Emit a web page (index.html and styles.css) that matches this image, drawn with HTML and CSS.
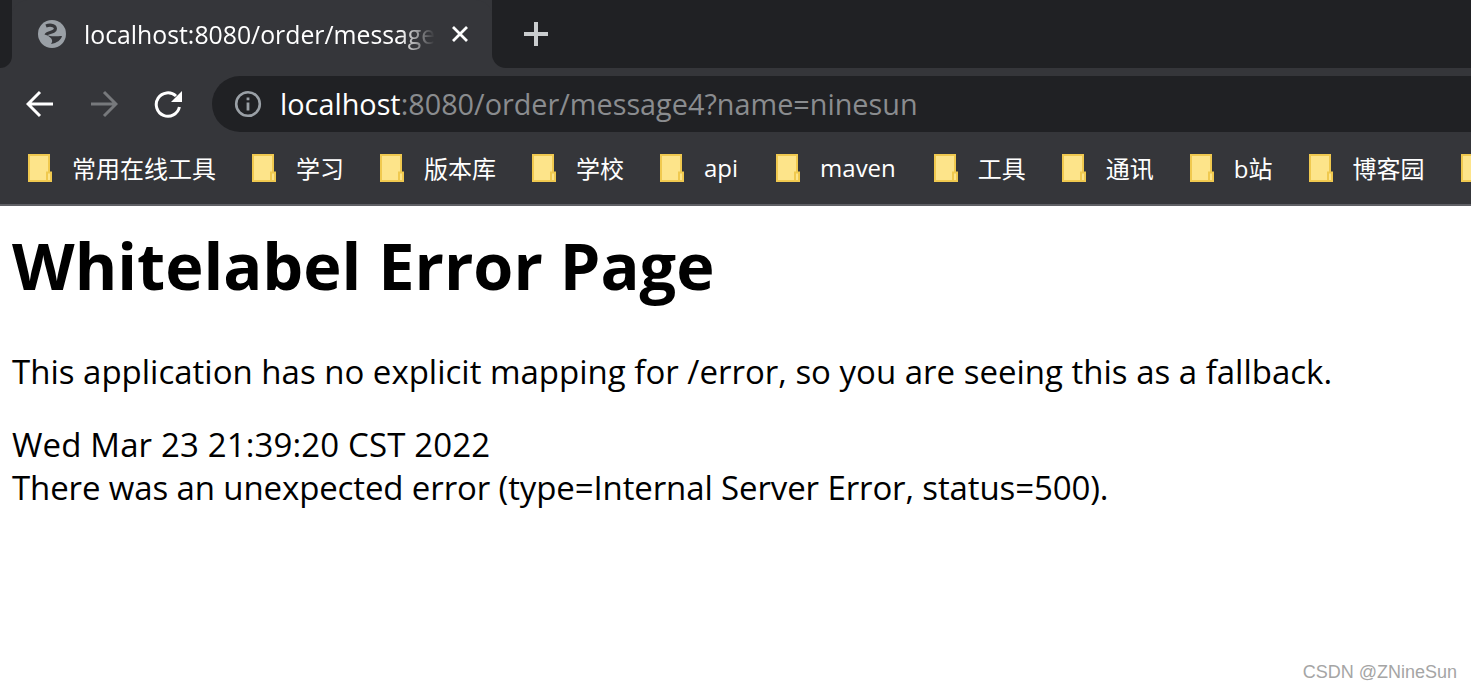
FILE: index.html
```html
<!DOCTYPE html>
<html lang="en">
<head>
    <meta charset="UTF-8">
    <title>Whitelabel Error Page</title>
    <link rel="stylesheet" href="styles.css">
</head>
<body>

<svg class="defs" width="0" height="0">
    <symbol id="folder" viewBox="0 0 24 28">
        <path d="M1 1h20v26H1z" fill="#fde48a" stroke="#f0c94f" stroke-width="2"/>
        <path d="M19 18.5h4v8.500h-4z" fill="#fde48a" stroke="#f0c94f" stroke-width="2"/>
    </symbol>
</svg>

<div class="tabstrip">
    <div class="tab">
        <svg class="globe" width="28" height="28" viewBox="0 0 28 28">
            <circle cx="14" cy="14" r="14" fill="#9aa0a6"/>
            <path d="M8 6C13 4 19 6 17 10C15 13 9 12 8 15" fill="none" stroke="#35363a" stroke-width="3.200"/>
            <path d="M9 15C12 17 20 16 24 16C23 20 19 23 13 24C15 21 15 19 9 15z" fill="#35363a"/>
        </svg>
        <span class="tab-title">localhost:8080/order/message4?name=ninesun</span>
        <svg class="tab-close" width="16" height="16" viewBox="0 0 16 16">
            <path d="M1 1l14 14M15 1L1 15" stroke="#fff" stroke-width="2.8"/>
        </svg>
    </div>
    <svg class="new-tab" width="24" height="24" viewBox="0 0 24 24">
        <path d="M12 0v24M0 12h24" stroke="#c9ccce" stroke-width="4"/>
    </svg>
</div>

<div class="toolbar">
    <svg class="nav-icon" width="28" height="28" viewBox="0 0 28 28" fill="none" stroke="#fff" stroke-width="3">
        <path d="M27 14H3M14 2L2 14l12 12"/>
    </svg>
    <svg class="nav-icon" width="28" height="28" viewBox="0 0 28 28" fill="none" stroke="#77797c" stroke-width="3">
        <path d="M1 14h24M14 2l12 12-12 12"/>
    </svg>
    <svg class="nav-icon" width="28" height="28" viewBox="0 0 28 28">
        <path d="M22 6A11.700 11.700 0 1 0 25.400 17" fill="none" stroke="#fff" stroke-width="3"/>
        <path d="M28 1v11H17z" fill="#fff"/>
    </svg>
    <div class="omnibox">
        <svg class="info-icon" width="28" height="28" viewBox="0 0 28 28">
            <circle cx="14" cy="14" r="11.800" fill="none" stroke="#9aa0a6" stroke-width="2.600"/>
            <path d="M12.600 12.500h2.800v8h-2.800zM12.600 7.500h2.800v2.800h-2.800z" fill="#9aa0a6"/>
        </svg>
        <span class="url"><span class="url-host">localhost</span>:8080/order/message4?name=ninesun</span>
    </div>
</div>

<div class="bookmarks">
    <a class="bookmark"><svg width="24" height="28"><use href="#folder"/></svg><span class="bookmark-label">常用在线工具</span></a>
    <a class="bookmark"><svg width="24" height="28"><use href="#folder"/></svg><span class="bookmark-label">学习</span></a>
    <a class="bookmark"><svg width="24" height="28"><use href="#folder"/></svg><span class="bookmark-label">版本库</span></a>
    <a class="bookmark"><svg width="24" height="28"><use href="#folder"/></svg><span class="bookmark-label">学校</span></a>
    <a class="bookmark"><svg width="24" height="28"><use href="#folder"/></svg><span class="bookmark-label latin">api</span></a>
    <a class="bookmark"><svg width="24" height="28"><use href="#folder"/></svg><span class="bookmark-label latin">maven</span></a>
    <a class="bookmark"><svg width="24" height="28"><use href="#folder"/></svg><span class="bookmark-label">工具</span></a>
    <a class="bookmark"><svg width="24" height="28"><use href="#folder"/></svg><span class="bookmark-label">通讯</span></a>
    <a class="bookmark"><svg width="24" height="28"><use href="#folder"/></svg><span class="bookmark-label">b站</span></a>
    <a class="bookmark"><svg width="24" height="28"><use href="#folder"/></svg><span class="bookmark-label">博客园</span></a>
    <a class="bookmark"><svg width="24" height="28"><use href="#folder"/></svg></a>
</div>

<div class="content">
    <h1>Whitelabel Error Page</h1>
    <p>This application has no explicit mapping for /error, so you are seeing this as a fallback.</p>
    <div class="date-line">Wed Mar 23 21:39:20 CST 2022</div>
    <div class="error-line">There was an unexpected error (type=Internal Server Error, status=500).</div>
</div>

<div class="watermark">CSDN @ZNineSun</div>

</body>
</html>
```

FILE: styles.css
```css
* {
    margin: 0;
    padding: 0;
    box-sizing: border-box;
}

html, body {
    height: 100%;
    overflow: hidden;
}

body {
    position: relative;
    background: #fff;
    font-family: "Open Sans", "Noto Sans CJK SC", sans-serif;
    color: #000;
}

.defs {
    position: absolute;
}

.tabstrip {
    display: flex;
    align-items: flex-end;
    height: 68px;
    padding-left: 12px;
    background: #35363a;
}

.tab {
    position: relative;
    display: flex;
    align-items: center;
    width: 480px;
    height: 68px;
    padding: 0 24px 0 26px;
    background: #35363a;
    border-radius: 16px 16px 0 0;
}

/* dark strip on both sides of the tab, rounded towards the tab foot */
.tab::before,
.tab::after {
    content: "";
    position: absolute;
    top: 0;
    height: 100%;
    background: #202124;
}

.tab::before {
    right: 100%;
    width: 12px;
    border-radius: 0 0 14px 0;
}

.tab::after {
    left: 100%;
    width: 979px;
    border-radius: 0 0 0 14px;
}

.globe {
    flex: none;
}

.tab-title {
    flex: 1;
    margin-left: 18px;
    overflow: hidden;
    white-space: nowrap;
    font-size: 24.800px;
    color: #fff;
    -webkit-mask-image: linear-gradient(to right, #000 90%, transparent);
    mask-image: linear-gradient(to right, #000 90%, transparent);
}

.tab-close {
    flex: none;
    margin-left: 17px;
}

.new-tab {
    position: relative;
    z-index: 1;
    margin: 0 0 22px 32px;
}

.toolbar {
    display: flex;
    align-items: center;
    height: 64px;
    padding: 8px 0 0 26px;
    background: #35363a;
}

.nav-icon {
    flex: none;
    margin-right: 36px;
}

.omnibox {
    display: flex;
    flex: 1;
    align-items: center;
    height: 56px;
    margin-left: -6px;
    padding-left: 22px;
    background: #202124;
    border-radius: 28px 0 0 28px;
}

.url {
    margin: 0 0 2px 18px;
    font-size: 28.800px;
    white-space: nowrap;
    color: #8a8c8f;
}

.url-host {
    color: #fff;
}

.bookmarks {
    display: flex;
    align-items: center;
    gap: 36px;
    height: 74px;
    padding-left: 28px;
    background: #35363a;
    border-bottom: 2px solid #5f6065;
    overflow: hidden;
}

.bookmark {
    display: flex;
    flex: none;
    align-items: center;
    gap: 20px;
    font-size: 24px;
    color: #fff;
}

.bookmark-label {
    padding-bottom: 2px;
}

.latin {
    margin-right: 2px;
}

.content {
    padding: 0 12px;
    font-size: 33px;
    line-height: 43px;
}

.content h1 {
    margin: 21px 0 47px;
    font-size: 64.800px;
    line-height: 76px;
    font-weight: 700;
}

.content p {
    margin-bottom: 30px;
}

.date-line {
    letter-spacing: 0.14px;
}

.error-line {
    letter-spacing: -0.12px;
}

.watermark {
    position: absolute;
    right: 14px;
    bottom: 6px;
    font-family: "Liberation Sans", sans-serif;
    font-size: 18px;
    color: #a5a5a5;
}
```
